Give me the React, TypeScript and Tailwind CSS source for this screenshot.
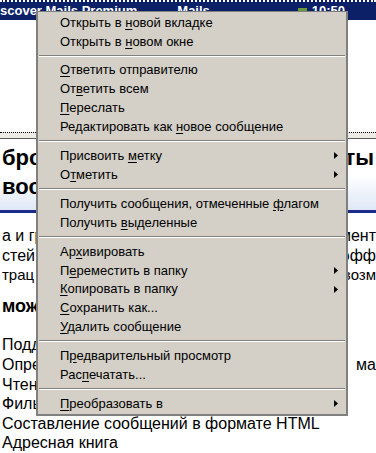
import React from "react"

type Item = { pre: string; key: string; post: string; sub?: boolean }

const groups: Item[][] = [
    [
        { pre: "Открыть в ", key: "н", post: "овой вкладке" },
        { pre: "Открыть в ", key: "н", post: "овом окне" },
    ],
    [
        { pre: "", key: "О", post: "тветить отправителю" },
        { pre: "От", key: "в", post: "етить всем" },
        { pre: "", key: "П", post: "ереслать" },
        { pre: "Редактировать как ", key: "н", post: "овое сообщение" },
    ],
    [
        { pre: "Присвоить ", key: "м", post: "етку", sub: true },
        { pre: "О", key: "т", post: "метить", sub: true },
    ],
    [
        { pre: "Получить сообщения, отмеченные ", key: "ф", post: "лагом" },
        { pre: "Получить ", key: "в", post: "ыделенные" },
    ],
    [
        { pre: "Ар", key: "х", post: "ивировать" },
        { pre: "П", key: "е", post: "реместить в папку", sub: true },
        { pre: "", key: "К", post: "опировать в папку", sub: true },
        { pre: "", key: "С", post: "охранить как..." },
        { pre: "", key: "У", post: "далить сообщение" },
    ],
    [
        { pre: "П", key: "р", post: "едварительный просмотр" },
        { pre: "Рас", key: "п", post: "ечатать..." },
    ],
    [{ pre: "", key: "П", post: "реобразовать в", sub: true }],
]

function MenuRow({ item }: { item: Item }) {
    return (
        <div className="flex items-center h-[18.9px] pl-[22px] pr-[8px]">
            <span className="flex-1 whitespace-nowrap">
                {item.pre}
                <span className="underline underline-offset-2">{item.key}</span>
                {item.post}
            </span>
            {item.sub && (
                <svg width="4" height="7" viewBox="0 0 4 7">
                    <path d="M0 0 L4 3.5 L0 7 Z" fill="#000" />
                </svg>
            )}
        </div>
    )
}

export default function App() {
    return (
        <div className="relative w-[376px] h-[453px] overflow-hidden bg-white font-['Liberation_Sans',Arial,sans-serif]">
            {/* page behind the menu */}
            <div className="h-[20px] bg-[#0b2066] border-t-2 border-dotted border-white flex items-center text-white font-bold text-[13px] whitespace-nowrap">
                <span>scover Mails Premium</span>
                <span className="ml-[40px]">Mails</span>
                <span className="ml-[88px] w-[9px] h-[6px] bg-[#6a9a3a]" />
                <span className="ml-[5px]">10:50</span>
            </div>
            <div className="h-[112px]" />
            <div className="h-[6px] bg-[#ecebe6] border-t border-dotted border-black" />
            <div className="h-px bg-[#5a5a5a]" />
            <div className="relative h-[74px] bg-gradient-to-b from-white via-white to-[#dfe8f5] border-b-[3px] border-[#1c2a8c] font-bold text-[22px] leading-[29px] text-black pt-[4px]">
                <div className="flex justify-between pl-[2px]">
                    <span>бро</span>
                    <span className="pr-[2px]">ты</span>
                </div>
                <div className="pl-[2px]">вос</div>
            </div>
            <div className="text-[16px] leading-[19.6px] text-black pl-[2px] pt-[13px]">
                <div className="flex justify-between">
                    <span>а и гр</span>
                    <span>мент</span>
                </div>
                <div className="flex justify-between">
                    <span>стей с</span>
                    <span>эфф</span>
                </div>
                <div className="flex justify-between text-[15px]">
                    <span>трац</span>
                    <span>возм</span>
                </div>
                <div className="font-bold text-[18px] mt-[12px]">мож</div>
                <div className="mt-[19px]">Подд</div>
                <div className="flex justify-between">
                    <span>Опре</span>
                    <span>ма</span>
                </div>
                <div>Чтен</div>
                <div>Филь</div>
                <div>Составление сообщений в формате HTML</div>
                <div>Адресная книга</div>
            </div>

            {/* context menu */}
            <div className="absolute left-[36px] top-[11px] w-[312px] bg-[#d4d0c8] border-t border-l-2 border-r-2 border-b-2 border-[#808080] text-[13px] text-black py-[1px]">
                {groups.map((group, gi) => (
                    <div key={gi}>
                        {gi > 0 && (
                            <div className="mx-[1px] my-[4px] h-[2px] border-t border-[#808080] border-b border-b-white" />
                        )}
                        {group.map((item, ii) => (
                            <MenuRow key={ii} item={item} />
                        ))}
                    </div>
                ))}
            </div>
        </div>
    )
}
